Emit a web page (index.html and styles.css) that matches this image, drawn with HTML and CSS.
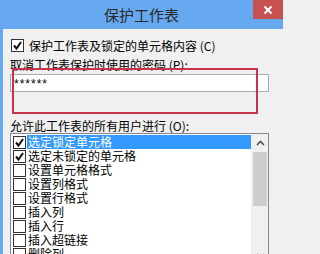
FILE: index.html
```html
<!DOCTYPE html>
<html lang="zh-CN">
<head>
<meta charset="utf-8">
<title>保护工作表</title>
<link rel="stylesheet" href="styles.css">
</head>
<body>
<div class="win">
  <div class="titlebar">
    <span></span>
    <span class="title">保护工作表</span>
    <span class="close">
      <svg width="10" height="10" viewBox="0 0 10 10"><path d="M1.5 1.5 L8.5 8.5 M8.5 1.5 L1.5 8.5" stroke="#fff" stroke-width="2" fill="none"/></svg>
    </span>
  </div>
  <div class="content">
    <div class="row-check">
      <span class="cb checked"><svg width="11" height="11" viewBox="0 0 11 11"><path d="M2 5.5 L4.5 8.5 L9 2" stroke="#111" stroke-width="2" fill="none"/></svg></span>
      <span class="lbl">保护工作表及锁定的单元格内容 (C)</span>
    </div>
    <div class="label pwd-label">取消工作表保护时使用的密码 (P):</div>
    <div class="input">******</div>
    <div class="sep"></div>
    <div class="label allow-label">允许此工作表的所有用户进行 (O):</div>
    <div class="list">
      <div class="items">
        <div class="item"><span class="cb checked"><svg width="11" height="11" viewBox="0 0 11 11"><path d="M2 5.5 L4.5 8.5 L9 2" stroke="#111" stroke-width="2" fill="none"/></svg></span><span class="txt sel">选定锁定单元格</span></div>
        <div class="item"><span class="cb checked"><svg width="11" height="11" viewBox="0 0 11 11"><path d="M2 5.5 L4.5 8.5 L9 2" stroke="#111" stroke-width="2" fill="none"/></svg></span><span class="txt">选定未锁定的单元格</span></div>
        <div class="item"><span class="cb"></span><span class="txt">设置单元格格式</span></div>
        <div class="item"><span class="cb"></span><span class="txt">设置列格式</span></div>
        <div class="item"><span class="cb"></span><span class="txt">设置行格式</span></div>
        <div class="item"><span class="cb"></span><span class="txt">插入列</span></div>
        <div class="item"><span class="cb"></span><span class="txt">插入行</span></div>
        <div class="item"><span class="cb"></span><span class="txt">插入超链接</span></div>
        <div class="item"><span class="cb"></span><span class="txt">删除列</span></div>
      </div>
      <div class="scroll">
        <div class="arrow up"><svg width="9" height="6" viewBox="0 0 9 6"><path d="M1 5 L4.5 1.5 L8 5" stroke="#505050" stroke-width="1.6" fill="none"/></svg></div>
        <div class="thumb"></div>
        <div class="track"></div>
        <div class="arrow down"><svg width="9" height="6" viewBox="0 0 9 6"><path d="M1 1 L4.5 4.5 L8 1" stroke="#505050" stroke-width="1.6" fill="none"/></svg></div>
      </div>
    </div>
    <div class="mark"></div>
  </div>
</div>
</body>
</html>
```

FILE: styles.css
```css
html, body {
  margin: 0;
  padding: 0;
  background: #f0f0f0;
}
body {
  width: 283px;
  height: 254px;
  overflow: hidden;
  font-family: "Noto Sans CJK SC", "Noto Sans", sans-serif;
  font-size: 12px;
  color: #000;
}
.win {
  display: flex;
  flex-direction: column;
  height: 254px;
}
.titlebar {
  height: 29px;
  flex: none;
  background: #66a9f0;
  display: grid;
  grid-template-columns: 30px 1fr 30px;
  align-items: start;
}
.title {
  text-align: center;
  font-size: 15px;
  line-height: 29px;
  color: #2a2a2a;
}
.close {
  height: 19px;
  background: #c75050;
  display: flex;
  align-items: center;
  justify-content: center;
}
.close svg {
  display: block;
}
.content {
  flex: 1;
  position: relative;
  border-left: 3px solid #66a9f0;
  padding-left: 7px;
  padding-right: 14px;
  display: flex;
  flex-direction: column;
  min-height: 0;
}
.row-check {
  margin-top: 10px;
  height: 13px;
  display: flex;
  align-items: center;
  padding-left: 1px;
}
.cb {
  width: 11px;
  height: 11px;
  border: 1px solid #333;
  background: #fff;
  flex: none;
  display: flex;
  align-items: center;
  justify-content: center;
}
.cb svg {
  display: block;
}
.lbl {
  margin-left: 5px;
  line-height: 13px;
  white-space: nowrap;
}
.label {
  line-height: 14px;
  white-space: nowrap;
}
.pwd-label {
  margin-top: 6px;
}
.input {
  margin-top: 2px;
  height: 16px;
  border: 1px solid #acacac;
  background: #fff;
  font-family: "Liberation Sans", sans-serif;
  font-size: 12px;
  line-height: 19px;
  letter-spacing: 1px;
  padding-left: 3px;
}
.sep {
  margin-top: 13px;
  height: 1px;
  background: #e0e0e0;
}
.allow-label {
  margin-top: 13px;
  line-height: 15px;
}
.list {
  margin-top: 0;
  flex: none;
  height: 130px;
  border: 1px solid #828790;
  background: #fff;
  display: flex;
}
.items {
  flex: 1;
  padding-top: 1px;
  padding-left: 2px;
  display: flex;
  flex-direction: column;
}
.item {
  height: 14px;
  display: flex;
  align-items: center;
}
.txt {
  margin-left: 1px;
  padding-left: 1px;
  line-height: 14px;
  height: 14px;
  white-space: nowrap;
}
.txt.sel {
  flex: 1;
  background: #3399ff;
  color: #fff;
}
.scroll {
  width: 16px;
  flex: none;
  background: #f0f0f0;
  display: flex;
  flex-direction: column;
  border-left: 1px solid #f0f0f0;
}
.arrow {
  height: 17px;
  display: flex;
  align-items: center;
  justify-content: center;
  flex: none;
}
.thumb {
  margin-top: 1px;
  height: 54px;
  margin-left: 1px;
  margin-right: 1px;
  background: #cdcdcd;
  flex: none;
}
.track {
  flex: 1;
}
.arrow.down {
  height: 17px;
}
.mark {
  position: absolute;
  left: 9px;
  top: 39px;
  width: 242px;
  height: 42px;
  border: 2px solid #c8324a;
  pointer-events: none;
}
```
